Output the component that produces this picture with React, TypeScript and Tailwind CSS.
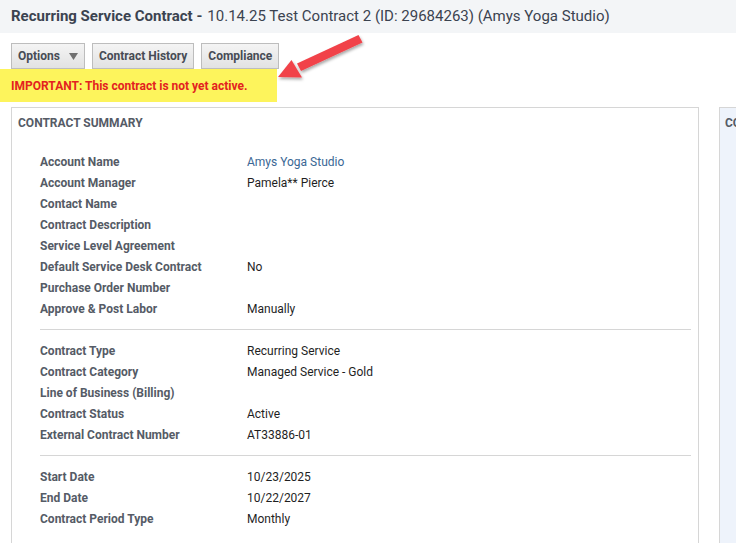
import React from "react";

type Row = { label: string; value?: string; link?: boolean };

const groups: Row[][] = [
  [
    { label: "Account Name", value: "Amys Yoga Studio", link: true },
    { label: "Account Manager", value: "Pamela** Pierce" },
    { label: "Contact Name" },
    { label: "Contract Description" },
    { label: "Service Level Agreement" },
    { label: "Default Service Desk Contract", value: "No" },
    { label: "Purchase Order Number" },
    { label: "Approve & Post Labor", value: "Manually" },
  ],
  [
    { label: "Contract Type", value: "Recurring Service" },
    { label: "Contract Category", value: "Managed Service - Gold" },
    { label: "Line of Business (Billing)" },
    { label: "Contract Status", value: "Active" },
    { label: "External Contract Number", value: "AT33886-01" },
  ],
  [
    { label: "Start Date", value: "10/23/2025" },
    { label: "End Date", value: "10/22/2027" },
    { label: "Contract Period Type", value: "Monthly" },
  ],
];

function ToolButton({ children }: { children: React.ReactNode }) {
  return (
    <button className="h-[26px] px-[6px] flex items-center gap-[9px] border border-[#bdbdbd] bg-gradient-to-b from-[#f4f4f4] to-[#e2e2e2] text-[12px] font-bold text-[#474c55]">
      {children}
    </button>
  );
}

function Arrow() {
  return (
    <svg className="absolute left-[268px] top-[30px]" width="100" height="60" viewBox="0 0 100 60">
      <defs>
        <filter id="shadow" x="-20%" y="-20%" width="140%" height="160%">
          <feDropShadow dx="1" dy="2" stdDeviation="1.5" floodColor="#000" floodOpacity="0.35" />
        </filter>
      </defs>
      <g filter="url(#shadow)" fill="#f1434a">
        <path d="M90.5 5 L94.5 12.5 L33 41 L29 33.5 Z" />
        <path d="M10 47 L23.5 30 L34 47.5 Z" />
      </g>
    </svg>
  );
}

export default function App() {
  return (
    <div className="relative w-[736px] h-[543px] overflow-hidden bg-white font-['Roboto',sans-serif]">
      <div className="h-[33px] bg-[#f3f5f7] flex items-center px-[11px] text-[15px] text-[#3b4350]">
        <span className="font-bold">Recurring Service Contract -</span>
        <span className="ml-[5px]">10.14.25 Test Contract 2 (ID: 29684263) (Amys Yoga Studio)</span>
      </div>

      <div className="flex gap-[7px] px-[11px] pt-[10px]">
        <ToolButton>
          Options
          <svg width="9" height="7" viewBox="0 0 9 7">
            <path d="M0 0 H9 L4.5 7 Z" fill="#707070" />
          </svg>
        </ToolButton>
        <ToolButton>Contract History</ToolButton>
        <ToolButton>Compliance</ToolButton>
      </div>

      <div className="w-[277px] h-[33px] bg-[#fdf45c] flex items-center px-[11px] pt-[1px] text-[12px] font-bold text-[#e3221f]">
        IMPORTANT: This contract is not yet active.
      </div>

      <div className="flex gap-[20px] pl-[11px] pt-[5px]">
        <div className="w-[688px] h-[450px] border border-[#d6d6d6] shrink-0">
          <div className="px-[6px] pt-[6px] text-[12px] font-bold text-[#555b66]">CONTRACT SUMMARY</div>
          <div className="pl-[28px] pr-[7px] pt-[19px]">
            {groups.map((g, i) => (
              <div key={i} className={i > 0 ? "border-t border-[#d6d6d6] mt-[10px] pt-[10px]" : ""}>
                {g.map((r) => (
                  <div key={r.label} className="flex h-[21px] items-center text-[12px]">
                    <div className="w-[207px] font-bold text-[#555b66]">{r.label}</div>
                    <div className={r.link ? "text-[#3a6794]" : "text-[#1f1f1f]"}>{r.value}</div>
                  </div>
                ))}
              </div>
            ))}
          </div>
        </div>
        <div className="w-[40px] h-[450px] border border-[#d6d6d6] bg-[#eef3fb] px-[5px] pt-[6px] text-[12px] font-bold text-[#555b66] shrink-0">
          CO
        </div>
      </div>

      <Arrow />
    </div>
  );
}
